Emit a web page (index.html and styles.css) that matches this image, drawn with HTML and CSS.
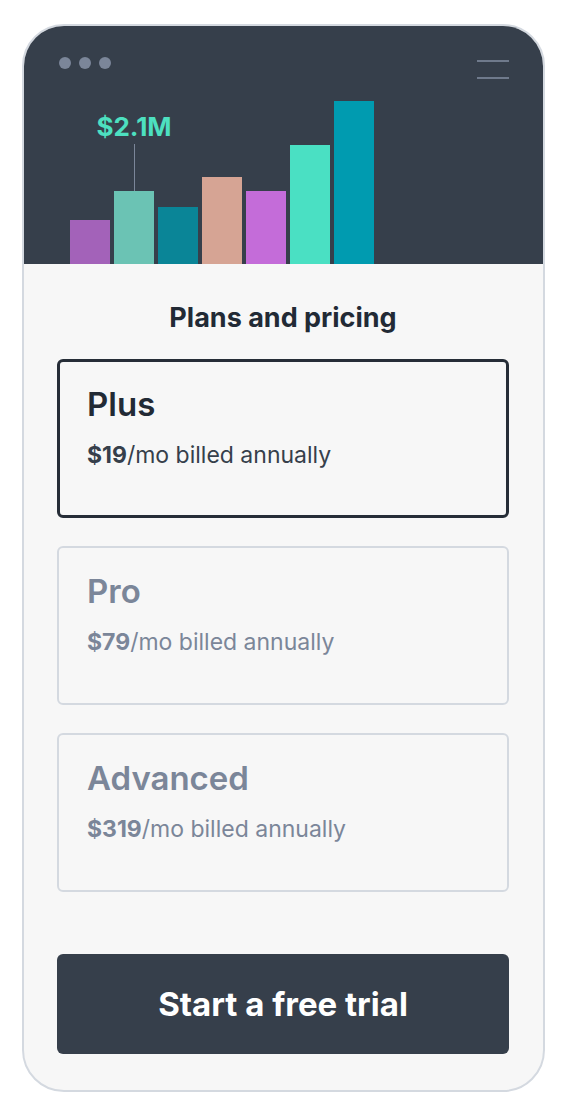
FILE: index.html
```html
<!DOCTYPE html>
<html lang="en">
<head>
    <meta charset="UTF-8">
    <meta name="viewport" content="width=device-width, initial-scale=1.0">
    <title>Plans and pricing</title>
    <link rel="stylesheet" href="styles.css">
</head>
<body>

    <div class="phone">
        <div class="header">
            <div class="topbar">
                <div class="dots">
                    <span></span>
                    <span></span>
                    <span></span>
                </div>
                <div class="menu">
                    <span></span>
                    <span></span>
                </div>
            </div>
            <div class="chart">
                <div class="bar" style="height: 44px; background: #a362b9;"></div>
                <div class="bar-col">
                    <div class="bar-label">$2.1M</div>
                    <div class="bar-line"></div>
                    <div class="bar" style="height: 73px; background: #6bc3b4;"></div>
                </div>
                <div class="bar" style="height: 57px; background: #0a8597;"></div>
                <div class="bar" style="height: 87px; background: #d6a494;"></div>
                <div class="bar" style="height: 73px; background: #c46cd9;"></div>
                <div class="bar" style="height: 119px; background: #4ae0c3;"></div>
                <div class="bar" style="height: 163px; background: #009bb0;"></div>
            </div>
        </div>

        <div class="content">
            <h2 class="title">Plans and pricing</h2>

            <div class="plans">
                <div class="plan plan-active">
                    <h3>Plus</h3>
                    <p><b>$19</b>/mo billed annually</p>
                </div>
                <div class="plan">
                    <h3>Pro</h3>
                    <p><b>$79</b>/mo billed annually</p>
                </div>
                <div class="plan">
                    <h3>Advanced</h3>
                    <p><b>$319</b>/mo billed annually</p>
                </div>
            </div>

            <button class="trial-btn">Start a free trial</button>
        </div>
    </div>

</body>
</html>
```

FILE: styles.css
```css
* {
    margin: 0;
    padding: 0;
    box-sizing: border-box;
}

body {
    background: #fff;
    font-family: Inter, "Noto Sans", sans-serif;
    color: #222a35;
}

.phone {
    width: 523px;
    height: 1068px;
    margin: 24px 23px 0 22px;
    border: 2px solid #d4d9e0;
    border-radius: 42px;
    background: #f7f7f7;
    overflow: hidden;
    display: flex;
    flex-direction: column;
}

.header {
    height: 238px;
    background: #363f4b;
    display: flex;
    flex-direction: column;
    justify-content: space-between;
}

.topbar {
    display: flex;
    justify-content: space-between;
    align-items: flex-start;
    padding: 0 34px 0 35px;
}

.dots {
    display: flex;
    gap: 8px;
    margin-top: 31px;
}

.dots span {
    width: 12px;
    height: 12px;
    border-radius: 50%;
    background: #7b8699;
}

.menu {
    width: 32px;
    display: flex;
    flex-direction: column;
    gap: 15px;
    margin-top: 34px;
}

.menu span {
    height: 2px;
    background: #6f7a8c;
}

.chart {
    display: flex;
    align-items: flex-end;
    gap: 4px;
    padding-left: 46px;
}

.bar {
    width: 40px;
}

.bar-col {
    width: 40px;
    display: flex;
    flex-direction: column;
    align-items: center;
}

.bar-label {
    color: #4de0c0;
    font-size: 26px;
    font-weight: 700;
    line-height: 30px;
    white-space: nowrap;
    margin-bottom: 2px;
}

.bar-line {
    width: 1px;
    height: 47px;
    background: #7b8699;
}

.content {
    flex: 1;
    padding: 0 34px 0 33px;
    display: flex;
    flex-direction: column;
}

.title {
    font-size: 27px;
    font-weight: 700;
    text-align: center;
    line-height: 30px;
    margin: 39px 0 26px;
}

.plans {
    display: flex;
    flex-direction: column;
    gap: 28px;
}

.plan {
    height: 159px;
    border: 2px solid #d4d9e0;
    border-radius: 6px;
    padding: 23px 28px;
    color: #7b8699;
}

.plan-active {
    border: 3px solid #262d37;
    padding: 22px 27px;
    color: #222a35;
}

.plan h3 {
    font-size: 33px;
    font-weight: 600;
    line-height: 40px;
}

.plan p {
    font-size: 23px;
    line-height: 26px;
    margin-top: 18px;
}

.plan-active p {
    color: #363f4b;
}

.trial-btn {
    margin-top: 62px;
    height: 100px;
    border: none;
    border-radius: 6px;
    background: #363f4b;
    color: #fff;
    font-family: inherit;
    font-size: 33px;
    font-weight: 700;
    cursor: pointer;
}
```
